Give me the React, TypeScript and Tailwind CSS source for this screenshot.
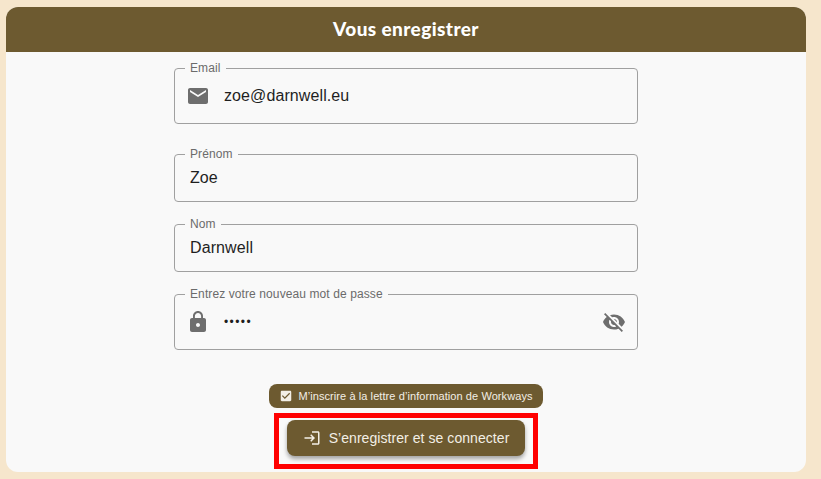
import React from 'react';

const MAIL = 'M20 4H4c-1.1 0-1.99.9-1.99 2L2 18c0 1.1.9 2 2 2h16c1.1 0 2-.9 2-2V6c0-1.1-.9-2-2-2zm0 4l-8 5-8-5V6l8 5 8-5v2z';
const LOCK = 'M18 8h-1V6c0-2.76-2.24-5-5-5S7 3.24 7 6v2H6c-1.1 0-2 .9-2 2v10c0 1.1.9 2 2 2h12c1.1 0 2-.9 2-2V10c0-1.1-.9-2-2-2zm-6 9c-1.1 0-2-.9-2-2s.9-2 2-2 2 .9 2 2-.9 2-2 2zm3.1-9H8.9V6c0-1.71 1.39-3.1 3.1-3.1 1.71 0 3.1 1.39 3.1 3.1v2z';
const EYE_OFF = 'M12 7c2.76 0 5 2.24 5 5 0 .65-.13 1.26-.36 1.83l2.92 2.92c1.51-1.26 2.7-2.89 3.43-4.75-1.73-4.39-6-7.5-11-7.5-1.4 0-2.74.25-3.98.7l2.16 2.16C10.74 7.13 11.35 7 12 7zM2 4.27l2.28 2.28.46.46C3.08 8.3 1.78 10.02 1 12c1.73 4.39 6 7.5 11 7.5 1.55 0 3.03-.3 4.38-.84l.42.42L19.73 22 21 20.73 3.27 3 2 4.27zM7.53 9.8l1.55 1.55c-.05.21-.08.43-.08.65 0 1.66 1.34 3 3 3 .22 0 .44-.03.65-.08l1.55 1.55c-.67.33-1.41.53-2.2.53-2.76 0-5-2.24-5-5 0-.79.2-1.53.53-2.2zm4.31-.78l3.15 3.15.02-.16c0-1.66-1.34-3-3-3l-.17.01z';
const LOGIN = 'M11 7 9.6 8.4l2.6 2.6H2v2h10.2l-2.6 2.6L11 17l5-5-5-5zm9 12h-8v2h8c1.1 0 2-.9 2-2V5c0-1.1-.9-2-2-2h-8v2h8v14z';
const CHECK = 'M19 3H5c-1.11 0-2 .9-2 2v14c0 1.1.89 2 2 2h14c1.11 0 2-.9 2-2V5c0-1.1-.89-2-2-2zm-9 14l-5-5 1.41-1.41L10 14.17l7.59-7.59L19 8l-9 9z';

const Icon: React.FC<{ d: string; className: string }> = ({ d, className }) => (
  <svg viewBox="0 0 24 24" fill="currentColor" className={className}>
    <path d={d} />
  </svg>
);

interface FieldProps {
  label: string;
  value: string;
  className: string;
  icon?: string;
  trailing?: string;
  masked?: boolean;
}

const Field: React.FC<FieldProps> = ({ label, value, className, icon, trailing, masked }) => (
  <div className={`relative flex items-center w-[464px] rounded border border-[#a0a0a0] ${className}`}>
    <span className="absolute -top-[8px] left-[10px] bg-[#f9f9f9] px-[5px] text-[12px] tracking-[0.1px] leading-[15px] text-[#6b6b6b]">{label}</span>
    {icon && <Icon d={icon} className="w-6 h-6 ml-[11px] mr-[14px] text-[#6e6e6e]" />}
    <span className={`flex-1 text-[#1f1f1f] ${masked ? 'text-[12px] tracking-[1.4px]' : 'text-[16px] tracking-[0.1px]'} ${icon ? '' : 'pl-[15px]'}`}>{value}</span>
    {trailing && <Icon d={trailing} className="w-6 h-6 mr-[11px] text-[#6e6e6e]" />}
  </div>
);

export default function App() {
  return (
    <div className="h-screen overflow-hidden bg-[#f6e6cc] pl-[6px] pt-[7px] font-['Liberation_Sans',sans-serif]">
      <div className="w-[800px] h-[465px] rounded-[12px] overflow-hidden bg-[#f9f9f9]">
        <div className="h-[45px] flex items-center justify-center bg-[#6d5a30] text-white text-[19px] tracking-[0.4px] font-black font-['Lato',sans-serif]">
          Vous enregistrer
        </div>
        <div className="flex flex-col items-center pt-[16px]">
          <Field label="Email" value="zoe@darnwell.eu" icon={MAIL} className="h-[56px]" />
          <Field label="Prénom" value="Zoe" className="h-[48px] mt-[30px]" />
          <Field label="Nom" value="Darnwell" className="h-[48px] mt-[22px]" />
          <Field label="Entrez votre nouveau mot de passe" value="•••••" icon={LOCK} trailing={EYE_OFF} masked className="h-[56px] mt-[22px]" />
          <div className="mt-[34px] h-[24px] w-[274px] flex items-center justify-center gap-[5px] rounded-[8px] bg-[#6d5a30] text-[#f3efe6] text-[11px] tracking-[0.08px]">
            <Icon d={CHECK} className="w-[14px] h-[14px]" />
            <span>M’inscrire à la lettre d’information de Workways</span>
          </div>
          <div className="mt-[5px] border-[5px] border-[#ff0000] px-[8px] pt-[2px] pb-[8px]">
            <button className="h-[36px] w-[238px] flex items-center justify-center gap-[8px] rounded-[8px] bg-[#6d5a30] text-[#f3efe6] text-[14px] tracking-[0.06px] shadow-[0_3px_4px_rgba(0,0,0,0.35)]">
              <Icon d={LOGIN} className="w-[18px] h-[18px]" />
              <span>S’enregistrer et se connecter</span>
            </button>
          </div>
        </div>
      </div>
    </div>
  );
}
